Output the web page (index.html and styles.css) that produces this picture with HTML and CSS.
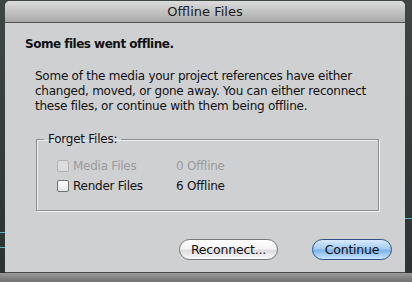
FILE: index.html
```html
<!DOCTYPE html>
<html lang="en">
<head>
    <meta charset="UTF-8">
    <meta name="viewport" content="width=device-width, initial-scale=1.0">
    <title>Offline Files</title>
    <link rel="stylesheet" href="styles.css">
</head>
<body>
    <div class="desktop">
        <div class="sheet">
            <div class="titlebar">Offline Files</div>

            <div class="content">
                <h1 class="heading">Some files went offline.</h1>

                <p class="message">
                    Some of the media your project references have either
                    changed, moved, or gone away. You can either reconnect
                    these files, or continue with them being offline.
                </p>

                <fieldset class="group">
                    <legend>Forget Files:</legend>
                    <div class="row disabled">
                        <span class="check"></span>
                        <span class="name">Media Files</span>
                        <span class="count">0 Offline</span>
                    </div>
                    <div class="row">
                        <span class="check"></span>
                        <span class="name">Render Files</span>
                        <span class="count">6 Offline</span>
                    </div>
                </fieldset>

                <div class="buttons">
                    <button class="btn">Reconnect...</button>
                    <button class="btn default">Continue</button>
                </div>
            </div>
        </div>
        <div class="toolbar"></div>
    </div>
</body>
</html>
```

FILE: styles.css
```css
body {
    margin: 0;
    background-color: #2f3834;
    font-family: 'DejaVu Sans', 'Liberation Sans', sans-serif;
    color: #111;
}
.desktop {
    width: 412px;
    height: 282px;
    overflow: hidden;
    display: flex;
    flex-direction: column;
    background:
        linear-gradient(#4fb8c4, #4fb8c4) 0 232px / 5px 1px no-repeat,
        linear-gradient(#4fb8c4, #4fb8c4) 0 247px / 5px 1px no-repeat,
        linear-gradient(#4fb8c4, #4fb8c4) 405px 218px / 7px 1px no-repeat,
        linear-gradient(to bottom, #3e4743, #323b38 60%, #2a3331);
}
.sheet {
    margin: 1px 0 0 5px;
    width: 400px;
    height: 272px;
    background-color: #cfd0d2;
    border-radius: 5px 5px 0 0;
    box-sizing: border-box;
    border-bottom: 1px solid #4a4a4a;
}
.titlebar {
    height: 21px;
    line-height: 21px;
    text-align: center;
    font-size: 13px;
    color: #1b1b1b;
    background: linear-gradient(to bottom, #dcdcdc, #a9a9a9);
    border-bottom: 1px solid #505050;
    border-radius: 5px 5px 0 0;
}
.content {
    padding: 13px 0 0 20px;
    letter-spacing: -0.25px;
}
.heading {
    margin: 0;
    font-size: 12px;
    line-height: 16px;
    font-weight: bold;
    letter-spacing: -0.5px;
}
.message {
    margin: 17px 0 0 10px;
    width: 345px;
    font-size: 12px;
    line-height: 15px;
}
.group {
    margin: 18px 0 0 11px;
    padding: 10px 0 0 20px;
    width: 343px;
    height: 79px;
    box-sizing: border-box;
    border: 1px solid #8f8f8f;
    box-shadow: 1px 1px 0 #f2f2f2, inset 1px 1px 0 #eeeeee;
}
.group legend {
    padding: 0 4px;
    margin-left: -13px;
    font-size: 12px;
}
.row {
    display: flex;
    align-items: center;
    height: 20px;
    font-size: 12px;
}
.row.disabled {
    color: #9b9b9b;
}
.check {
    width: 10px;
    height: 10px;
    margin-right: 4px;
    border: 1px solid #707070;
    border-radius: 2px;
    background: linear-gradient(to bottom, #ffffff, #e4e4e4);
}
.row.disabled .check {
    border-color: #b3b3b3;
    background: #dcdcdc;
}
.name {
    width: 103px;
}
.buttons {
    display: flex;
    justify-content: flex-end;
    gap: 34px;
    margin: 28px 13px 0 0;
}
.btn {
    width: 99px;
    height: 21px;
    padding: 0;
    border: 1px solid #777;
    border-radius: 11px;
    font-family: inherit;
    font-size: 12.5px;
    letter-spacing: -0.2px;
    color: #111;
    background: linear-gradient(to bottom, #ffffff 0%, #f4f4f4 45%, #dcdcdc 55%, #fafafa 100%);
}
.btn.default {
    width: 80px;
    border-color: #2f4f86;
    background: linear-gradient(to bottom, #d9eafc 0%, #a4cdf5 45%, #7fb4ec 55%, #c9e6ff 100%);
}
.toolbar {
    flex: 1;
    background: linear-gradient(to bottom, #9a9a9a, #6f6f6f);
}
```
